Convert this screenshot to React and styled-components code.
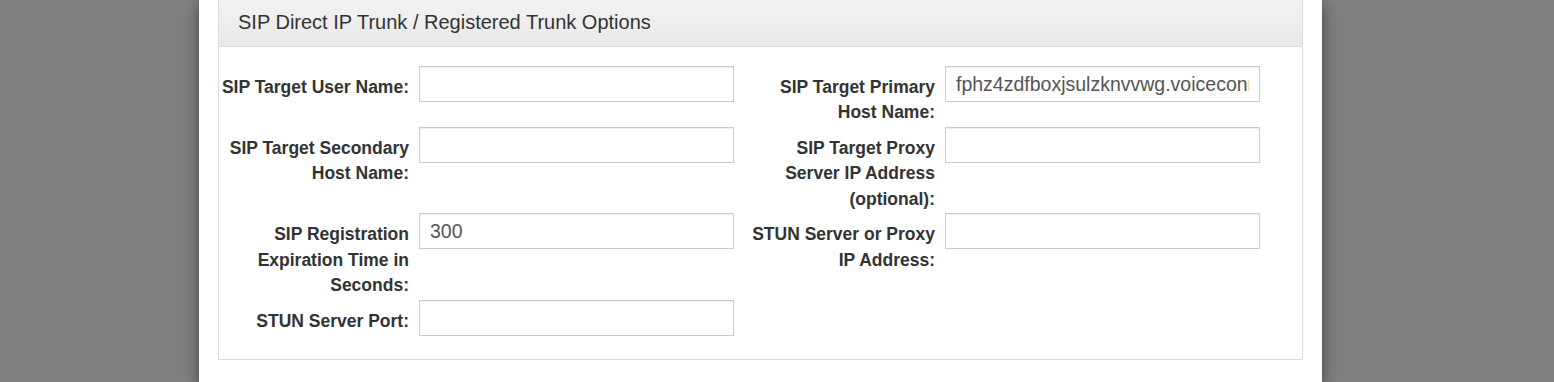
import React from "react";
import styled, { createGlobalStyle } from "styled-components";

const Global = createGlobalStyle`
  html, body { margin: 0; padding: 0; }
  body {
    background: #808080;
    font-family: "Liberation Sans", Arial, sans-serif;
    color: #333;
    height: 382px;
    overflow: hidden;
  }
`;

const Modal = styled.div`
  margin-left: 199px;
  width: 1123px;
  height: 382px;
  background: #fff;
  box-shadow: 0 5px 15px rgba(0, 0, 0, 0.5);
  padding: 0 19px;
  box-sizing: border-box;
  overflow: hidden;
`;

const Panel = styled.div`
  margin-top: -11px;
  border: 1px solid #ddd;
  background: #fff;
`;

const Header = styled.div`
  background: linear-gradient(to bottom, #f5f5f5 0%, #e8e8e8 100%);
  border-bottom: 1px solid #ddd;
  padding: 21px 19px 13px;
  height: 22px;
`;

const Title = styled.h3`
  margin: 0;
  font-size: 20px;
  line-height: 22px;
  font-weight: 400;
  color: #333;
`;

const Body = styled.div`
  padding: 19px 0 23px;
  display: grid;
  grid-template-columns: 515px 515px;
  column-gap: 11px;
  row-gap: 1.5px;
`;

const Field = styled.div`
  display: flex;
  align-items: flex-start;
  gap: 10px;
`;

const Label = styled.label`
  width: 190px;
  flex: none;
  text-align: right;
  font-weight: 700;
  font-size: 17.5px;
  line-height: 25.3px;
  padding-top: 9px;
  color: #333;
`;

const Input = styled.input`
  width: 315px;
  height: 36px;
  box-sizing: border-box;
  border: 1px solid #ccc;
  border-radius: 0;
  padding: 0 10px;
  font-family: "Liberation Sans", Arial, sans-serif;
  font-size: 19.5px;
  color: #555;
  background: #fff;
  box-shadow: inset 0 1px 1px rgba(0, 0, 0, 0.075);
  outline: none;
  flex: none;
`;

const fields = [
  ["SIP Target User Name:", ""],
  ["SIP Target Primary Host Name:", "fphz4zdfboxjsulzknvvwg.voiceconnect.mitel.com"],
  ["SIP Target Secondary Host Name:", ""],
  ["SIP Target Proxy Server IP Address (optional):", ""],
  ["SIP Registration Expiration Time in Seconds:", "300"],
  ["STUN Server or Proxy IP Address:", ""],
  ["STUN Server Port:", ""],
];

export default function App() {
  return (
    <>
      <Global />
      <Modal>
        <Panel>
          <Header>
            <Title>SIP Direct IP Trunk / Registered Trunk Options</Title>
          </Header>
          <Body>
            {fields.map(([label, value], i) => (
              <Field key={i}>
                <Label>{label}</Label>
                <Input type="text" defaultValue={value} />
              </Field>
            ))}
          </Body>
        </Panel>
      </Modal>
    </>
  );
}
